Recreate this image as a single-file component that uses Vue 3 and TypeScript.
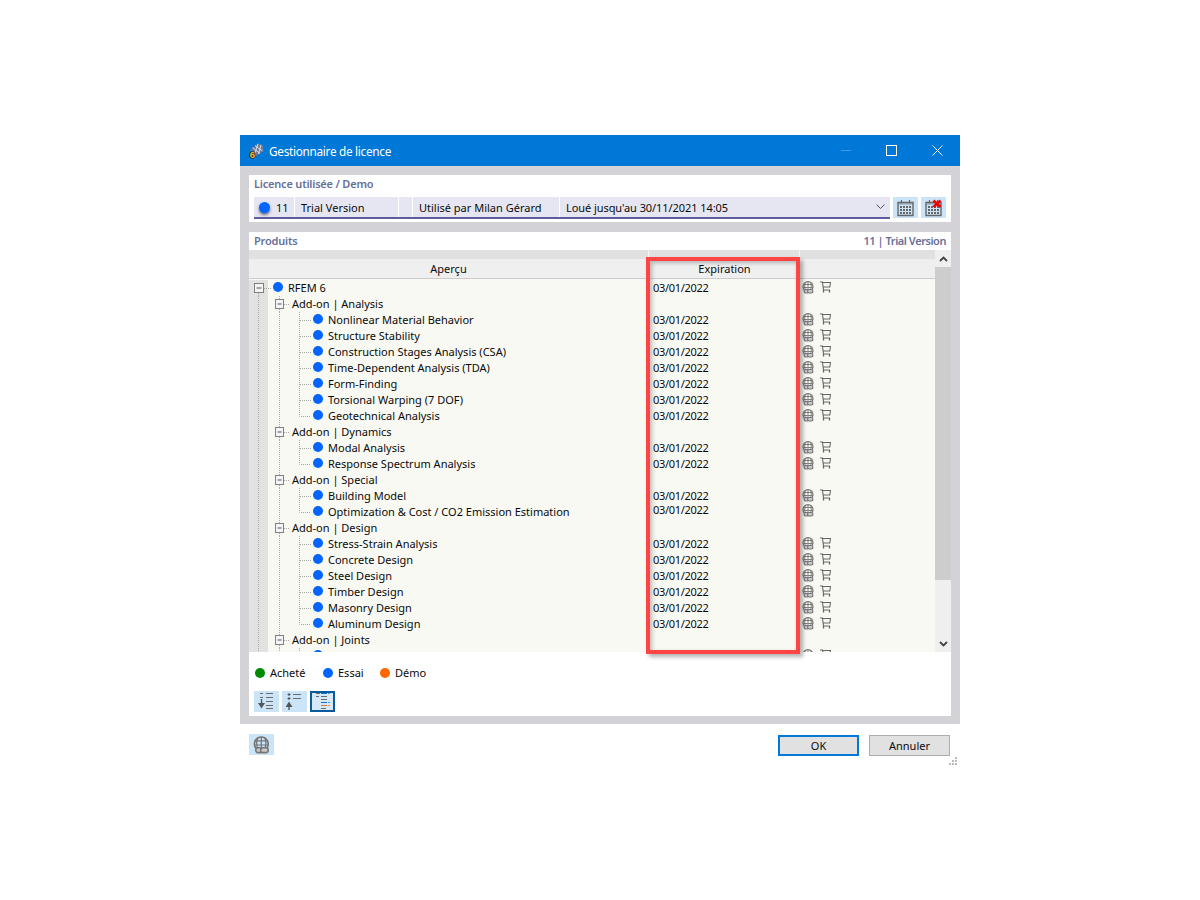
<script setup lang="ts">
interface Row { level: 0 | 1 | 2; label: string; date?: string; globe?: boolean; cart?: boolean; raised?: boolean; last?: boolean }
const d = '03/01/2022'
const item = (label: string, last = false): Row => ({ level: 2, label, date: d, globe: true, cart: true, last })
const rows: Row[] = [
  { level: 0, label: 'RFEM 6', date: d, globe: true, cart: true },
  { level: 1, label: 'Add-on | Analysis' },
  item('Nonlinear Material Behavior'),
  item('Structure Stability'),
  item('Construction Stages Analysis (CSA)'),
  item('Time-Dependent Analysis (TDA)'),
  item('Form-Finding'),
  item('Torsional Warping (7 DOF)'),
  item('Geotechnical Analysis', true),
  { level: 1, label: 'Add-on | Dynamics' },
  item('Modal Analysis'),
  item('Response Spectrum Analysis', true),
  { level: 1, label: 'Add-on | Special' },
  item('Building Model'),
  { level: 2, label: 'Optimization & Cost / CO2 Emission Estimation', date: d, globe: true, raised: true, last: true },
  { level: 1, label: 'Add-on | Design' },
  item('Stress-Strain Analysis'),
  item('Concrete Design'),
  item('Steel Design'),
  item('Timber Design'),
  item('Masonry Design'),
  item('Aluminum Design', true),
  { level: 1, label: 'Add-on | Joints' },
  { level: 2, label: '', globe: true, cart: true }
]
const guideWidth = (r: Row): number => (r.level === 0 ? 24 : r.level === 1 ? 43 : 64)
const legend = [
  { label: 'Acheté', color: '#008a00' },
  { label: 'Essai', color: '#0066ff' },
  { label: 'Démo', color: '#ff6600' }
]
</script>

<template>
  <div class="window">
    <header class="titlebar">
      <svg class="app-icon" width="18" height="18" viewBox="0 0 18 18">
        <path d="M2 8 10 1.500 15 3.500 15.500 9 8 14Z" fill="#6f7a96" />
        <path d="M4.500 5.500 12 11.500M7 3.500 14.500 9M10 1.800 6.500 13M13 2.800 10.500 12" stroke="#dfe6f2" stroke-width=".9" fill="none" />
        <text x="4.500" y="15.500" class="six">6</text>
      </svg>
      <span class="title">Gestionnaire de licence</span>
      <div class="win-controls">
        <span class="ctl"><i class="min"></i></span>
        <span class="ctl"><i class="max"></i></span>
        <span class="ctl">
          <svg width="11" height="11" viewBox="0 0 11 11"><path d="M.5.5 10.500 10.500M10.500.5.5 10.500" stroke="#fff" fill="none" /></svg>
        </span>
      </div>
    </header>

    <div class="body">
      <section class="panel license">
        <h2 class="heading">Licence utilisée / Demo</h2>
        <div class="combo-row">
          <div class="combo">
            <span class="c-dot"><i class="dot big"></i></span>
            <span class="cell c-num">11</span>
            <span class="cell c-ver">Trial Version</span>
            <span class="cell c-empty"></span>
            <span class="cell c-user">Utilisé par Milan Gérard</span>
            <span class="cell c-loan">Loué jusqu'au 30/11/2021 14:05</span>
            <svg class="chev" width="9" height="6" viewBox="0 0 9 6"><path d="M.5.5 4.500 4.500 8.500.5" fill="none" stroke="#555" /></svg>
          </div>
          <button class="tool">
            <svg width="17" height="18" viewBox="0 0 17 18"><use href="#cal" /></svg>
          </button>
          <button class="tool">
            <svg width="17" height="18" viewBox="0 0 17 18" class="overflow">
              <use href="#cal" />
              <path d="M8.500 1.500 15.500 8M15.500 1.500 8.500 8" stroke="#f00000" stroke-width="2.600" fill="none" />
            </svg>
          </button>
        </div>
      </section>

      <section class="panel products">
        <div class="prod-head">
          <h2 class="heading">Produits</h2>
          <h2 class="heading tight">11 | Trial Version</h2>
        </div>
        <div class="table">
          <div class="table-main">
            <div class="band"><span class="b1"></span><span class="b2"></span><span class="b3"></span></div>
            <div class="thead">
              <span class="th t1">Aperçu</span>
              <span class="th t2">Expiration</span>
              <span class="th t3"></span>
            </div>
            <div class="tbody">
              <div v-for="(r, i) in rows" :key="i" class="row">
                <div class="col-tree">
                  <svg class="guide" :width="guideWidth(r)" height="16" :viewBox="`0 0 ${guideWidth(r)} 16`">
                    <rect x="0" y="0" width="19" height="16" fill="#e2e2e2" />
                    <template v-if="r.level === 0">
                      <path d="M9.500 13V16M15 8.500H22" class="dots" />
                      <rect x="5.500" y="3.500" width="9" height="9" fill="#f4f4f4" stroke="#808080" />
                      <path d="M7.500 8H12.500" stroke="#555" />
                    </template>
                    <template v-else-if="r.level === 1">
                      <path d="M9.500 0V16M30.500 0V3M30.500 13V16M35 8.500H41" class="dots" />
                      <rect x="26.500" y="3.500" width="8" height="9" fill="#f4f4f4" stroke="#808080" />
                      <path d="M28.500 8H32.500" stroke="#555" />
                    </template>
                    <template v-else>
                      <path :d="r.last ? 'M9.500 0V16M30.500 0V16M50.500 0V8.500H62' : 'M9.500 0V16M30.500 0V16M50.500 0V16M51 8.500H62'" class="dots" />
                    </template>
                  </svg>
                  <i v-if="r.level !== 1" class="dot up"></i>
                  <span class="label">{{ r.label }}</span>
                </div>
                <div class="col-date" :class="{ raised: r.raised }">{{ r.date }}</div>
                <div class="col-icons" :class="{ raised: r.raised }">
                  <svg v-if="r.globe" class="ico" width="13" height="13" viewBox="0 0 13 13"><use href="#globe" /></svg>
                  <svg v-if="r.cart" class="ico" width="11" height="12" viewBox="0 0 11 12"><use href="#cart" /></svg>
                </div>
              </div>
            </div>
          </div>
          <div class="scroll">
            <span class="arrow">
              <svg width="9" height="6" viewBox="0 0 9 6"><path d="M1 5 4.500 1.500 8 5" fill="none" stroke="#444" stroke-width="1.800" /></svg>
            </span>
            <span class="thumb"></span>
            <span class="track"></span>
            <span class="arrow">
              <svg width="9" height="6" viewBox="0 0 9 6"><path d="M1 1 4.500 4.500 8 1" fill="none" stroke="#444" stroke-width="1.800" /></svg>
            </span>
          </div>
        </div>
        <div class="legend">
          <span v-for="l in legend" :key="l.label" class="leg-item">
            <i class="leg-dot" :style="{ background: l.color }"></i>{{ l.label }}
          </span>
        </div>
        <div class="view-tools">
          <button class="tool">
            <svg width="17" height="17" viewBox="0 0 17 17">
              <path d="M2 .5H5M2 4.500H5M8 .5H15M8 4.500H15M8 8.500H15M8 12.500H15M8 15.500H15" stroke="#6b6b6b" fill="none" />
              <path d="M3.500 6V12" stroke="#555" stroke-width="1.400" />
              <path d="M0 10H7L3.500 15.500Z" fill="#555" />
            </svg>
          </button>
          <button class="tool">
            <svg width="17" height="17" viewBox="0 0 17 17">
              <path d="M7 1.500H15M7 5.500H15" stroke="#6b6b6b" fill="none" />
              <path d="M1.500 1.500H4.500M3 0V3M1.500 5.500H4.500M3 4V7" stroke="#555" fill="none" />
              <path d="M-.5 14H6.500L3 8.500Z" fill="#555" />
              <path d="M3 13V17" stroke="#555" stroke-width="1.400" />
            </svg>
          </button>
          <button class="tool active">
            <svg width="17" height="17" viewBox="0 0 17 17">
              <path d="M2 .5H6M2 3.500H5M7 3.500H13M7 6.500H13M7 15.500H12" stroke="#6b6b6b" />
              <path d="M7 .5H13M7 9.500H13" stroke="#1170cf" />
              <path d="M14 .5H16M14 9.500H16" stroke="#35a0f0" />
              <path d="M7 12.500H13" stroke="#e0742a" />
              <path d="M14 12.500H16" stroke="#f0a030" />
            </svg>
          </button>
        </div>
      </section>
    </div>

    <footer class="footer">
      <button class="tool globe-btn">
        <svg width="18" height="18" viewBox="0 0 13 13"><use href="#globe" /></svg>
      </button>
      <div class="actions">
        <button class="btn primary">OK</button>
        <button class="btn">Annuler</button>
      </div>
      <svg class="grip" width="9" height="9" viewBox="0 0 9 9">
        <path d="M6 0h2v2H6zM3 3h2v2H3zM6 3h2v2H6zM0 6h2v2H0zM3 6h2v2H3zM6 6h2v2H6z" fill="#bbb" />
      </svg>
    </footer>

    <div class="highlight"></div>

    <svg class="defs" width="0" height="0">
      <defs>
        <g id="cal">
          <path d="M1 3.500H16V16.500H1Z" fill="none" stroke="#666" stroke-width="1.400" />
          <path d="M1 3H16V6H1Z" fill="#666" opacity=".3" />
          <path d="M4.500 1V4.500M12.500 1V4.500" stroke="#666" stroke-width="1.200" />
          <path d="M3 7h2v2H3zM6 7h2v2H6zM9 7h2v2H9zM12 7h2v2h-2zM3 10h2v2H3zM6 10h2v2H6zM9 10h2v2H9zM12 10h2v2h-2zM3 13h2v2H3zM6 13h2v2H6zM9 13h2v2H9zM12 13h2v2h-2z" fill="#666" />
        </g>
        <g id="globe" fill="none" stroke="#757575">
          <circle cx="6" cy="5.700" r="5" stroke-width="1.200" />
          <path d="M1 3.500H11M1 6.500H11M6 .8V9M3.600 1.200C2.400 3.500 2.400 6.500 3.600 9M8.400 1.200C9.600 3.500 9.600 6.500 8.400 9" stroke-width=".9" />
          <rect x="2" y="8.500" width="5" height="3.500" rx="1.700" fill="#c9c9c9" stroke-width="1.100" />
          <rect x="5.500" y="8.500" width="5.500" height="3.500" rx="1.700" fill="#c9c9c9" stroke-width="1.100" />
        </g>
        <g id="cart" fill="none" stroke="#666">
          <path d="M0 1H2.500L3.500 9H10M2.700 1.500H10.500L9.800 6H3.200" stroke-width="1.100" />
          <path d="M3.500 9V11.500M9.500 9V11.500" stroke-width="1.300" />
        </g>
      </defs>
    </svg>
  </div>
</template>

<style scoped>
.window {
  position: relative;
  width: 720px;
  margin: 135px auto 0;
  font-family: "Noto Sans", "Open Sans", sans-serif;
  font-size: 11px;
  color: #0a0a0a;
}
.titlebar {
  height: 31px;
  background: #0078d7;
  display: flex;
  align-items: center;
  padding-left: 8px;
  color: #fff;
}
.app-icon { margin-right: 3px; }
.six { font: bold 9.500px "Liberation Sans", sans-serif; fill: #f2b632; stroke: #2a2a2a; stroke-width: 1.500px; paint-order: stroke; text-anchor: middle; }
.title { font-size: 11.800px; letter-spacing: -.3px; }
.win-controls { margin-left: auto; display: flex; }
.ctl { width: 46px; height: 31px; display: flex; align-items: center; justify-content: center; }
.min { width: 10px; height: 1px; background: #3a98e4; display: block; margin-left: 1px; }
.max { width: 9px; height: 9px; border: 1px solid #fff; display: block; }
.body {
  background: #d2d2d7;
  padding: 9px 9px 8px;
  display: flex;
  flex-direction: column;
  gap: 10px;
}
.panel { background: #fff; }
.heading {
  margin: 0;
  font-size: 11px;
  font-weight: 600;
  color: #66709a;
  line-height: 18px;
  letter-spacing: -.2px;
}
.heading.tight { letter-spacing: -.45px; }
.license { height: 47px; padding: 0 5px; box-sizing: border-box; }
.license .heading { height: 22px; line-height: 18px; }
.combo-row { display: flex; gap: 3px; align-items: flex-start; }
.combo {
  width: 636px;
  height: 22px;
  box-sizing: border-box;
  background: #e6e6f2;
  border-bottom: 2px solid #5e5c9e;
  display: flex;
  align-items: center;
}
.c-dot { width: 21px; display: flex; padding-left: 5px; box-sizing: border-box; }
.cell { height: 20px; line-height: 22px; box-sizing: border-box; border-left: 1px solid transparent; }
.c-num { width: 19px; }
.c-ver { width: 104px; border-left-color: #fff; padding-left: 6px; }
.c-empty { width: 14px; border-left-color: #fff; }
.c-user { width: 147px; border-left-color: #fff; padding-left: 6px; }
.c-loan { flex: 1; border-left-color: #fff; padding-left: 6px; letter-spacing: -.07px; }
.chev { margin-right: 5px; }
.tool {
  width: 25px;
  height: 21px;
  border: 0;
  padding: 0;
  background: #cce4f7;
  display: flex;
  align-items: center;
  justify-content: center;
}
.overflow { overflow: visible; }
.tool.active { box-sizing: border-box; border: 2px solid #0a5a9e; background: #d6e9f9; }
.dot { display: block; width: 10px; height: 10px; border-radius: 50%; background: #0066ff; flex: none; margin-right: 5px; }
.dot.up { position: relative; top: -1px; }
.dot.big { width: 11px; height: 11px; box-shadow: 0 2px 3px rgba(0, 0, 40, .55); margin: 0; }
.prod-head { display: flex; justify-content: space-between; height: 18px; padding: 0 5px; }
.table { display: flex; height: 402px; }
.table-main { width: 686px; display: flex; flex-direction: column; }
.band { display: flex; height: 9px; background: #e0e0e0; flex: none; }
.b1 { width: 399px; border-right: 1px solid #f4f4f4; }
.b2 { width: 150px; border-right: 1px solid #f4f4f4; }
.thead { display: flex; height: 20px; flex: none; box-sizing: border-box; background: #efefef; border-bottom: 1px solid #ccc; }
.th { text-align: center; line-height: 20px; }
.t1 { width: 399px; }
.t2 { width: 151px; padding-left: 2px; box-sizing: border-box; }
.t3 { flex: 1; }
.tbody { flex: 1; overflow: hidden; background: #f8f9f3; padding-top: 1px; }
.row { display: flex; height: 16px; line-height: 16px; }
.col-tree { width: 399px; display: flex; align-items: center; }
.guide { flex: none; display: block; }
.dots { fill: none; stroke: #a8a8a8; stroke-dasharray: 1 1; }
.col-date { width: 151px; padding-left: 5px; box-sizing: border-box; letter-spacing: -.3px; }
.col-icons { flex: 1; display: flex; align-items: center; gap: 5px; padding-left: 3px; position: relative; top: -1px; }
.raised { position: relative; top: -2px; }
.col-icons.raised { top: -2px; }
.ico { flex: none; display: block; }
.scroll { width: 16px; display: flex; flex-direction: column; background: #efefef; }
.arrow { height: 17px; display: flex; align-items: center; justify-content: center; flex: none; }
.thumb { height: 313px; background: #cdcdcd; flex: none; }
.track { flex: 1; }
.legend { display: flex; align-items: center; height: 21px; margin-top: 10px; padding-left: 6px; }
.leg-item { display: flex; align-items: center; }
.leg-item:nth-child(1) { width: 68px; }
.leg-item:nth-child(2) { width: 57px; }
.leg-dot { width: 10px; height: 10px; border-radius: 50%; margin-right: 5px; display: block; }
.view-tools { display: flex; gap: 3px; padding: 0 0 4px 5px; margin-top: 8px; }
.footer { position: relative; height: 41px; display: flex; align-items: flex-start; padding: 10px 10px 0 9px; background: #fff; }
.globe-btn { height: 21px; }
.actions { margin-left: auto; display: flex; gap: 10px; padding-top: 1px; }
.btn {
  width: 81px;
  height: 21px;
  box-sizing: border-box;
  background: #e1e1e1;
  border: 1px solid #adadad;
  font: 11px "Noto Sans", sans-serif;
  color: #0a0a0a;
  padding: 0;
}
.btn.primary { border: 2px solid #0078d7; }
.grip { position: absolute; right: 2px; bottom: 0; margin-bottom: 0; transform: translateY(-9px); }
.highlight {
  position: absolute;
  left: 406px;
  top: 122px;
  width: 154px;
  height: 397px;
  box-sizing: border-box;
  border: 4px solid #ff4444;
  box-shadow: 3px 3px 4px rgba(0, 0, 0, .3), inset 2px 2px 4px rgba(0, 0, 0, .25);
  pointer-events: none;
}
.defs { position: absolute; }
</style>
